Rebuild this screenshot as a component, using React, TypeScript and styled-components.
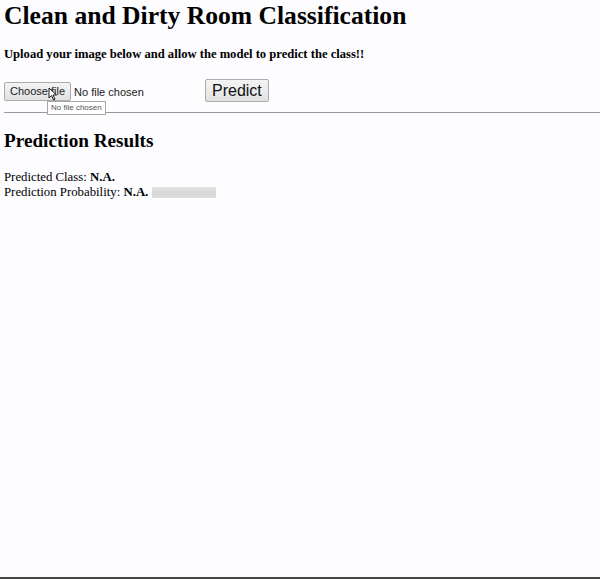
import React from "react";
import styled, { createGlobalStyle } from "styled-components";

const GlobalStyle = createGlobalStyle`
  html, body {
    margin: 0;
    padding: 0;
    background: #fdfcff;
  }
  body {
    font-family: "Liberation Serif", "Times New Roman", serif;
    color: #000;
  }
`;

const Page = styled.div`
  min-height: 100vh;
  display: flex;
  flex-direction: column;
  box-sizing: border-box;
`;

const Content = styled.div`
  padding: 0 4px;
`;

const Title = styled.h1`
  margin: 0;
  padding-top: 1px;
  font-size: 25.6px;
  line-height: 29px;
  font-weight: bold;
`;

const SubTitle = styled.h4`
  margin: 17px 0 0;
  font-size: 12.6px;
  line-height: 15px;
  font-weight: bold;
`;

const UploadForm = styled.form`
  display: flex;
  align-items: flex-end;
  margin-top: 15px;
  height: 25px;
`;

const FileField = styled.div`
  position: relative;
  width: 201px;
  display: flex;
  align-items: center;
  gap: 3px;
  margin-bottom: 1px;
  font-family: "Liberation Sans", Arial, sans-serif;
  font-size: 11px;
  color: #222;
`;

const GrayButton = styled.button<{ $big?: boolean }>`
  font-family: "Liberation Sans", Arial, sans-serif;
  font-size: ${(p) => (p.$big ? "16px" : "11px")};
  color: ${(p) => (p.$big ? "#111" : "#222")};
  height: ${(p) => (p.$big ? "23px" : "19px")};
  padding: ${(p) => (p.$big ? "0 6px" : "0 5px")};
  border: 1px solid #ababab;
  border-radius: 2px;
  background: linear-gradient(#f4f4f4, #e2e2e2);
  line-height: 1;
  cursor: default;
`;

const FileName = styled.span`
  white-space: nowrap;
`;

const Tooltip = styled.div`
  position: absolute;
  left: 43px;
  top: 19px;
  padding: 0 3px;
  height: 12px;
  line-height: 12px;
  font-family: "Liberation Sans", Arial, sans-serif;
  font-size: 8px;
  color: #555;
  background: #fff;
  border: 1px solid #a8a8a8;
  white-space: nowrap;
`;

const Cursor = styled.svg`
  position: absolute;
  left: 44px;
  top: 5px;
`;

const Rule = styled.hr`
  margin: 10px 0 0;
  border: none;
  border-top: 1px solid #9a9a9a;
  margin-right: -4px;
`;

const ResultsTitle = styled.h2`
  margin: 17px 0 0;
  font-size: 19.2px;
  line-height: 22px;
  font-weight: bold;
`;

const ResultBlock = styled.div`
  margin-top: 18px;
  font-size: 12.8px;
  line-height: 15px;
`;

const ResultLine = styled.div`
  display: flex;
  align-items: center;
  white-space: pre;
`;

const Bar = styled.span`
  display: inline-block;
  width: 64px;
  height: 11px;
  margin-left: 4px;
  background: linear-gradient(#e6e6e6, #d6d6d6 50%, #dedede);
  border-radius: 1px;
`;

const BottomEdge = styled.div`
  margin-top: auto;
  height: 2px;
  background: #444;
`;

export default function App() {
  return (
    <Page>
      <GlobalStyle />
      <Content>
        <Title>Clean and Dirty Room Classification</Title>
        <SubTitle>Upload your image below and allow the model to predict the class!!</SubTitle>

        <UploadForm onSubmit={(e) => e.preventDefault()}>
          <FileField>
            <GrayButton type="button">Choose file</GrayButton>
            <FileName>No file chosen</FileName>
            <Cursor width="10" height="14" viewBox="0 0 10 14">
              <path
                d="M1 1 L1 11 L3.5 8.5 L5.5 13 L7 12.3 L5 8 L8.5 8 Z"
                fill="#fff"
                stroke="#000"
                strokeWidth="0.9"
                strokeLinejoin="round"
              />
            </Cursor>
            <Tooltip>No file chosen</Tooltip>
          </FileField>
          <GrayButton $big type="submit">Predict</GrayButton>
        </UploadForm>
      </Content>

      <Content>
        <Rule />
        <ResultsTitle>Prediction Results</ResultsTitle>
        <ResultBlock>
          <ResultLine>
            Predicted Class: <b>N.A.</b>
          </ResultLine>
          <ResultLine>
            Prediction Probability: <b>N.A.</b>
            <Bar />
          </ResultLine>
        </ResultBlock>
      </Content>

      <BottomEdge />
    </Page>
  );
}
